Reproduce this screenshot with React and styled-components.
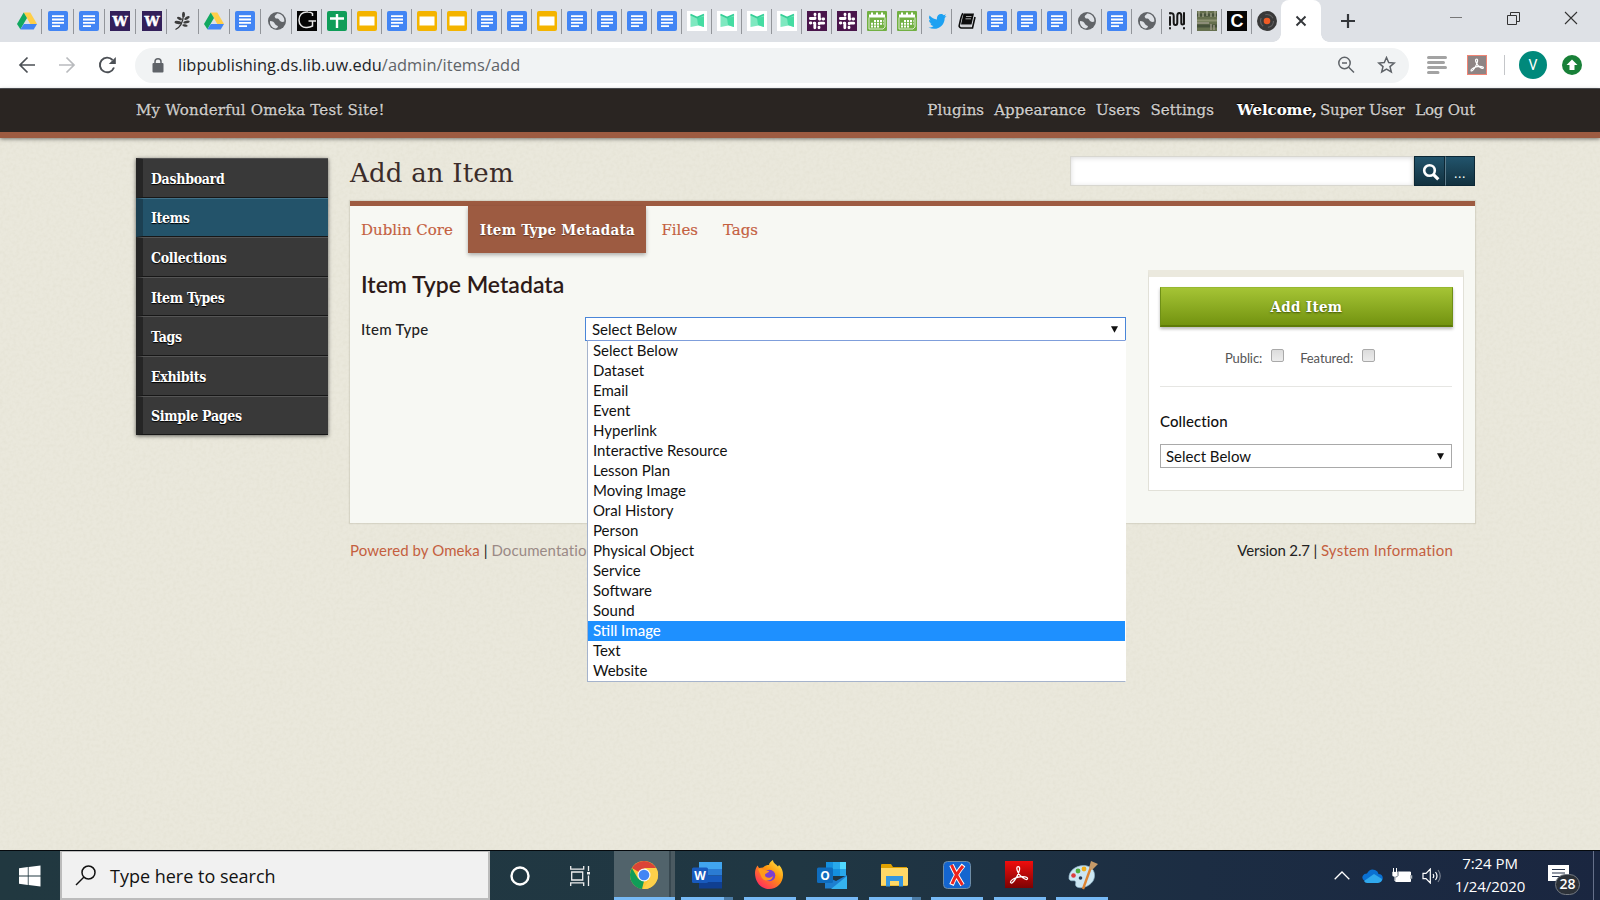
import React from "react";
import styled, { createGlobalStyle, css } from "styled-components";

const slab = '"DejaVu Serif", "Liberation Serif", serif';
const slabNarrow = '"DejaVu Serif Condensed", "DejaVu Serif", serif';
const sans = 'Lato, "Liberation Sans", sans-serif';
const system = '"Open Sans", "Noto Sans", sans-serif';
const rust = "#9d5b41";
const linkColor = "#c4603f";

const GlobalStyle = createGlobalStyle`
  *, *::before, *::after { box-sizing: border-box; }
  body { margin: 0; overflow: hidden; }
  button { border: 0; padding: 0; background: none; font: inherit; color: inherit; }
  svg { display: block; flex: none; }
`;

const Screen = styled.div`
  width: 1600px;
  height: 900px;
  display: flex;
  flex-direction: column;
  overflow: hidden;
  background: #eae8dc;
  font-family: ${sans};
  font-size: 15px;
  color: #222;
`;

/* ---------- browser ---------- */
const TabStrip = styled.div`
  height: 42px;
  flex: none;
  display: flex;
  background: #dee1e6;
  padding-left: 11px;
`;
const Tab = styled.div`
  width: ${(p) => (p.$last ? 29.2 : p.$wide ? 31.25 : 30)}px;
  height: 42px;
  flex: none;
  display: flex;
  align-items: center;
  justify-content: center;
  background: ${(p) => (p.$last ? "none" : "linear-gradient(#92959a, #92959a) right 0 top 9px / 1px 25px no-repeat")};
`;
const ActiveTab = styled.div`
  width: 40px;
  height: 42px;
  flex: none;
  display: grid;
  place-items: center;
  background: #fff;
  border-radius: 8px 8px 0 0;
  position: relative;
  &::before, &::after {
    content: "";
    position: absolute;
    bottom: 0;
    width: 8px;
    height: 8px;
  }
  &::before { left: -8px; background: radial-gradient(circle at 0 0, transparent 7.5px, #fff 8px); }
  &::after { right: -8px; background: radial-gradient(circle at 100% 0, transparent 7.5px, #fff 8px); }
`;
const NewTab = styled.button`
  width: 54px;
  display: grid;
  place-items: center;
`;
const WindowButtons = styled.div`
  margin-left: auto;
  display: flex;
  height: 35px;
`;
const WindowButton = styled.button`
  width: 57.5px;
  display: grid;
  place-items: center;
`;
const Toolbar = styled.div`
  height: 47px;
  flex: none;
  display: flex;
  align-items: center;
  background: #fff;
  border-bottom: 1px solid #55565a;
  padding: 0 18px 0 17px;
`;
const NavButton = styled.button`
  width: 20px;
  height: 20px;
  margin-right: 20px;
  display: grid;
  place-items: center;
`;
const AddressBar = styled.div`
  width: 1274px;
  height: 35px;
  margin-left: -2px;
  border-radius: 18px;
  background: #f1f3f4;
  display: flex;
  align-items: center;
  padding: 0 13px 0 17px;
`;
const Url = styled.div`
  margin-left: 14px;
  flex: 1;
  font: 16.4px/22px ${system};
  letter-spacing: 0.03px;
  color: #606468;
  white-space: nowrap;
  b { font-weight: 400; color: #222428; }
`;
const BarIcons = styled.div`
  display: flex;
  gap: 22px;
`;
const Extensions = styled.div`
  flex: 1;
  display: flex;
  align-items: center;
  padding-left: 18px;
`;
const Spacer = styled.i`
  width: 20px;
`;
const Divider = styled.i`
  width: 1px;
  height: 20px;
  background: #c4c6c9;
  margin: 0 14px 0 17px;
`;
const Avatar = styled.div`
  width: 28px;
  height: 28px;
  border-radius: 50%;
  background: #00897b;
  color: #fff;
  font: 14px/28px Roboto, sans-serif;
  text-align: center;
  margin-right: 15px;
`;

/* ---------- admin site ---------- */
const SiteHeader = styled.header`
  height: 49px;
  flex: none;
  position: relative;
  z-index: 1;
  display: flex;
  align-items: center;
  padding: 0 125px 2px 136px;
  background: #2a2522;
  border-bottom: 6px solid ${rust};
  box-shadow: 0 1px 4px rgba(0, 0, 0, 0.5);
  font: 15px/20px ${slab};
  color: #cfcdcb;
  -webkit-text-stroke: 0.3px #cfcdcb;
  text-shadow: 0 -1px 1px #000;
  white-space: nowrap;
`;
const SiteTitle = styled.div`
  letter-spacing: 0.21px;
`;
const HeaderNav = styled.nav`
  margin-left: auto;
  display: flex;
  gap: 10px;
  letter-spacing: 0.08px;
`;
const UserNav = styled.div`
  display: flex;
  gap: 11px;
  margin-left: 13px;
  letter-spacing: -0.24px;
  strong {
    color: #fff;
    margin-right: -8px;
    letter-spacing: -0.08px;
    -webkit-text-stroke: 0;
  }
`;
const Page = styled.div`
  flex: 1;
  position: relative;
  display: flex;
  align-items: flex-start;
  padding: 20px 125px 0 136px;
`;
const Paper = styled.svg`
  position: absolute;
  inset: 0;
  width: 100%;
  height: 100%;
`;
const SideNav = styled.nav`
  position: relative;
  width: 192px;
  flex: none;
  box-shadow: 0 1px 4px rgba(0, 0, 0, 0.6);
`;
const SideLink = styled.div`
  height: 39.6px;
  display: flex;
  align-items: center;
  padding: 2px 0 0 8px;
  border-left: 7px solid ${(p) => (p.$active ? "#1c4052" : "#252525")};
  border-top: 1px solid ${(p) => (p.$active ? "#417189" : "#555")};
  border-bottom: 1px solid #171717;
  background: ${(p) => (p.$active ? "#23536a" : "#393939")};
  color: #fff;
  font: 700 14px/18px ${slabNarrow};
  letter-spacing: -0.3px;
  text-shadow: 0 1px 1px #000;
`;
const Main = styled.main`
  position: relative;
  width: 1125px;
  margin-left: 22px;
`;
const TitleRow = styled.div`
  height: 43px;
  display: flex;
  align-items: flex-start;
  justify-content: space-between;
`;
const Title = styled.h1`
  margin: -3px 0 0;
  font: 400 26px/36px ${slab};
  letter-spacing: 0.2px;
  color: #3b2c2a;
`;
const SearchForm = styled.div`
  display: flex;
  margin-top: -2px;
  height: 30px;
`;
const SearchInput = styled.div`
  width: 344px;
  background: #fff;
  border: 1px solid #d8d7d0;
  box-shadow: inset 0 1px 5px rgba(0, 0, 0, 0.15);
`;
const SearchButton = styled.button`
  width: ${(p) => p.$w}px;
  display: flex;
  align-items: center;
  justify-content: center;
  background: linear-gradient(#22546c, #12313f);
  border: 1px solid #0c2735;
  border-left-color: ${(p) => (p.$split ? "#5d7c8b" : "#0c2735")};
  color: #fff;
  font: 13px/28px ${system};
  padding: ${(p) => (p.$split ? "3px 0 0" : "1px 0 0 2px")};
  letter-spacing: 0.6px;
`;
const Panel = styled.section`
  height: 322px;
  background: #f7f8f3;
  border-top: 5px solid ${rust};
  box-shadow: 0 0 1px 1px rgba(90, 85, 60, 0.12);
  padding-left: 11px;
`;
const Tabs = styled.div`
  display: flex;
  height: 47px;
  align-items: flex-start;
  font: 15px/48px ${slab};
  color: ${linkColor};
  -webkit-text-stroke: 0.15px;
  white-space: nowrap;
`;
const TabLink = styled.span`
  margin-right: ${(p) => p.$gap}px;
`;
const CurrentTab = styled.span`
  width: 178px;
  height: 47px;
  text-align: center;
  background: ${rust};
  color: #fff;
  font: 700 15px/48px ${slabNarrow};
  letter-spacing: 0.24px;
  -webkit-text-stroke: 0;
  text-shadow: 0 1px 1px rgba(0, 0, 0, 0.4);
  box-shadow: 0 2px 4px rgba(0, 0, 0, 0.3);
  margin-right: 15px;
`;
const PanelBody = styled.div`
  display: flex;
  justify-content: space-between;
  padding: 15px 11px 0 0;
`;
const FormColumn = styled.div`
  width: 766px;
`;
const Heading = styled.h2`
  margin: 0;
  font: 600 23px/32px ${sans};
  color: #2e1b18;
`;
const Field = styled.div`
  display: flex;
  padding-top: 17px;
`;
const FieldLabel = styled.label`
  width: 224px;
  font: 500 15px/24px ${sans};
  letter-spacing: 0.3px;
`;
const SelectWrap = styled.div`
  position: relative;
  width: 541px;
`;
const SelectBox = styled.div`
  height: 24px;
  display: flex;
  align-items: center;
  justify-content: space-between;
  padding: 0 7px 0 ${(p) => (p.$focus ? 6 : 5)}px;
  background: #fff;
  border: 1px solid ${(p) => (p.$focus ? "#4a86d8" : "#a9a9a9")};
  color: #111;
  line-height: 22px;
`;
const Options = styled.div`
  position: absolute;
  z-index: 2;
  top: 23px;
  left: 2px;
  width: 539px;
  background: #fff;
  border: 1px solid #a5b3cc;
  border-top-color: #7f9edb;
  border-right-color: #fff;
`;
const Option = styled.div`
  height: 20px;
  padding-left: 5px;
  line-height: 19px;
  white-space: nowrap;
  ${(p) => p.$hot ? css`background: #1e90ff; color: #fff; font-weight: 500;` : css`color: #111;`}
`;
const SavePanel = styled.aside`
  width: 316px;
  height: 221px;
  margin-top: 2px;
  background: #fff;
  border: 1px solid #e2e1d8;
  border-top: 7px solid #ebe9de;
  padding: 10px 11px;
`;
const AddButton = styled.button`
  width: 293px;
  height: 40px;
  display: block;
  background: linear-gradient(#a5c435, #739310);
  border: 1px solid #6f9016;
  border-top-color: #97b830;
  border-bottom: 2px solid #5e7b08;
  box-shadow: 0 2px 3px rgba(0, 0, 0, 0.28);
  font: 700 15px/36px ${slabNarrow};
  letter-spacing: 0.3px;
  color: #fff;
  text-shadow: 0 1px 2px #3d5205;
`;
const Flags = styled.div`
  display: flex;
  justify-content: center;
  align-items: center;
  height: 60px;
  padding: 3px 12px 0 0;
  border-bottom: 1px solid #e6e6e3;
  font-size: 13px;
  letter-spacing: -0.1px;
  color: #555;
`;
const Check = styled.i`
  width: 13px;
  height: 13px;
  margin: -6px ${(p) => p.$gap}px 0 9px;
  border: 1px solid #a9a9a9;
  border-radius: 2px;
  background: linear-gradient(#dcdcdc, #ececec);
`;
const CollectionLabel = styled.div`
  margin: 23px 0 12px;
  line-height: 22px;
  font-weight: 500;
  color: #111;
  letter-spacing: 0.1px;
`;
const Footer = styled.footer`
  display: flex;
  justify-content: space-between;
  padding: 15px 22px 0 0;
  line-height: 24px;
  letter-spacing: 0.08px;
`;
const FooterLink = styled.span`
  color: ${(p) => (p.$visited ? "#9a8a86" : linkColor)};
  letter-spacing: ${(p) => (p.$spread ? 0.22 : 0.08)}px;
`;
const Version = styled.span`
  letter-spacing: -0.14px;
`;

/* ---------- taskbar ---------- */
const Taskbar = styled.div`
  height: 50px;
  flex: none;
  position: relative;
  display: flex;
  border-top: 1px solid #05090d;
  background: linear-gradient(90deg, #213840 0%, #203743 50%, #1c2d43 75%, #1a2640 100%);
`;
const Start = styled.div`
  width: 60px;
  display: grid;
  place-items: center;
`;
const TaskSearch = styled.div`
  width: 430px;
  display: flex;
  align-items: center;
  background: #f1f1f1;
  border: 2px solid #bcbcbc;
  border-top-width: 1px;
  padding: 1px 0 0 13px;
  gap: 14px;
  font: 18px/24px ${system};
  color: #111;
`;
const SystemButton = styled.div`
  width: ${(p) => p.$w}px;
  display: grid;
  place-items: center;
`;
const TaskSpacer = styled.div`
  width: 5px;
`;
const AppButton = styled.div`
  width: ${(p) => (p.$active ? 61 : 52)}px;
  margin-right: ${(p) => (p.$active ? 6 : 10.5)}px;
  display: flex;
  align-items: center;
  justify-content: center;
  border-bottom: 3px solid #76b9f5;
  background: ${(p) => (p.$active ? "linear-gradient(90deg, #51636b 55px, #384850 55px, #384850 57px, #4b5a61 57px)" : "none")};
  ${(p) => p.$stacked && css`border-image: linear-gradient(90deg, #76b9f5 41px, #4b7ba5 41px) 3;`}
  svg { margin: 1px ${(p) => (p.$active ? 2 : 1)}px 0 0; }
`;
const Tray = styled.div`
  margin-left: auto;
  display: flex;
  align-items: center;
  color: #fff;
`;
const TrayIcon = styled.span`
  margin-right: ${(p) => p.$gap}px;
`;
const Clock = styled.div`
  width: 82px;
  margin: -2px 2px 0 7px;
  text-align: center;
  font: 15px/23px ${system};
  letter-spacing: -0.05px;
`;
const Notifications = styled.div`
  position: relative;
  margin: -2px 24px 0 15px;
`;
const Count = styled.div`
  position: absolute;
  left: 7px;
  top: 9px;
  width: 25px;
  height: 21px;
  border-radius: 11px;
  background: #2c3138;
  border: 1px solid #747a82;
  text-align: center;
  font: 600 14px/18px ${system};
`;
const DesktopEdge = styled.div`
  width: 7px;
  height: 49px;
  border-left: 1px solid #65708a;
`;

/* ---------- favicons ---------- */
const favicons = {
  drive: <><path d="M6.7 1.5h6.6L20 13h-6.7z" fill="#ffcf48" /><path d="M6.7 1.5 10 7 3.4 18.3 0 13z" fill="#11a861" /><path d="M6.8 13H20l-3.3 5.5H3.3z" fill="#4285f4" /></>,
  doc: <><rect width="20" height="20" rx="2" fill="#4285f4" /><path d="M4 5.2h12M4 8.5h12M4 11.8h12M4 15.2h8" stroke="#fff" strokeWidth="1.8" /></>,
  slides: <><rect width="20" height="20" rx="2" fill="#f4b400" /><rect x="2.5" y="5.5" width="15" height="9" fill="#fff" /></>,
  sheets: <><rect width="20" height="20" rx="2" fill="#0f9d58" /><path d="M10 3v14M3 7.5h14" stroke="#fff" strokeWidth="2.4" /></>,
  uw: <><rect width="20" height="20" fill="#33205a" /><text x="10" y="14.7" textAnchor="middle" fontFamily="DejaVu Serif" fontWeight="700" fontSize="13.5" fill="#fff" stroke="#fff" strokeWidth=".5">W</text></>,
  leaf: <><path d="M2.500 18.500C8 16 10 11 10.500 4" fill="none" stroke="#333" strokeWidth="1.300" /><g fill="#3c3c3c"><ellipse cx="10.500" cy="3.500" rx="1.500" ry="2.700" /><ellipse cx="6.500" cy="7.500" rx="2.700" ry="1.400" transform="rotate(25 6.500 7.500)" /><ellipse cx="14" cy="7" rx="3" ry="1.400" transform="rotate(-30 14 7)" /><ellipse cx="5" cy="11.500" rx="3.500" ry="1.500" transform="rotate(10 5 11.500)" /><ellipse cx="13.500" cy="11" rx="3.200" ry="1.400" transform="rotate(-12 13.500 11)" /><ellipse cx="12" cy="14.500" rx="2.700" ry="1.200" transform="rotate(12 12 14.500)" /></g></>,
  globe: <><circle cx="10" cy="10" r="9" fill="#616468" /><path d="M3 10c3 0 4 1 5 3s3 1 3 3l-2 1.5C5 17 2.5 14 3 10zM10 2.5c-1 2-3 2-2 4s3 0 4 2 3 3 5.3 2C18 6 14 2 10 2.5z" fill="#dee1e6" /></>,
  gale: <><rect width="20" height="20" fill="#050505" /><path d="M11 1C5 .5 2 4 2 9s3.500 8 8 7.500q3-.2 5.500-1.500V10M11.500 10H19M11 1q3 0 4.500 1.500V5" fill="none" stroke="#e8e8e8" strokeWidth="1.500" /></>,
  mint: <><rect width="20" height="20" fill="#fff" /><path d="M3.500 3.500 10 6.500l7-3V16l-5.500-1.500-8 1.500z" fill="#7fe8c0" /><path d="m10 7 7-1.500V16l-6-2z" fill="#45dca2" /><path d="m3.500 3.500 6.500 3 7-3" fill="none" stroke="#35cf97" strokeWidth="1.600" /></>,
  slack: <><rect width="20" height="20" fill="#4a154b" /><path d="M8 3.200v.6M8 7.500H3.300M12.300 3.200v4.500M16.700 8h-.7M16.700 12.200h-4.500M12 16.800v-.6M7.800 16.800v-4.500M3.300 12h.6M8 7.500V6.800M12.300 8h.7M12.200 12.200v.6M7.800 12.200h-.6" stroke="#fff" strokeWidth="2.800" strokeLinecap="round" /></>,
  calendar: <><rect width="20" height="20" rx="1" fill="#72b043" /><path d="M2 6.5V18h14l2-2V6.500" fill="none" stroke="#dcecd0" /><path d="M2 5h16" stroke="#fff" strokeWidth="3" /><path d="M5 1.500v3M10 1.500v3M15 1.500v3" stroke="#fff" strokeWidth="2" /><path d="M7 10h9.500M4 12.700h12.500M4 15.500h9" stroke="#fff" strokeWidth="2" strokeDasharray="2 1" /></>,
  twitter: <path d="M1.500 16.500c2 .1 3.600-.4 5-1.500-1.600 0-2.700-1-3.200-2.400h1.500C3 12 2 10.800 2 9l1.500.4C2 8.200 1.600 6.400 2.600 4.600 4.600 7 7 8.200 10 8.400 9.400 5.500 11.300 3 14 3c1.200 0 2 .4 2.800 1.200L19 3.300l-1.500 2.200 2-.5-1.800 1.900C17.700 15 10 20.500 1.500 16.500z" fill="#1da1f2" />,
  book: <><path d="M6.500 2.500H17l-2.500 11H4z" fill="#0c0c0c" /><path d="M6 2.500C4 3.500 3 12.500 2.300 14S3 17 4.500 17h11L18 6" fill="none" stroke="#0c0c0c" strokeWidth="1.600" /><path d="M9 5.500h5.500M8.500 7.800H14M4.500 15h9.500" stroke="#b5b5b5" strokeWidth=".9" /></>,
  squiggle: <path d="M3 2v.1M3 6v8M3 17v.5M3 2.500Q6.700 1.500 6.700 5v6.500q0 2.500 1.800 2.500t1.800-2.500V5q0-3 2-3t2 3v7q0 1.500 1.500 1.500M17 2v11M17 17v.5" fill="none" stroke="#161616" strokeWidth="2" strokeLinecap="round" />,
  photo: <><rect width="20" height="20" fill="#66704e" /><path d="M0 4h20M0 15h20" stroke="#46513a" strokeWidth="3" /><path d="M2 0v6M6 2v4M10 0v5M14 2v4M18 0v6" stroke="#a3a68c" strokeWidth="1.300" /><path d="M0 9.500h20" stroke="#8d9272" strokeWidth="2" /><path d="M0 12h12M14 13v6M17 14v5" stroke="#9a9787" strokeWidth="1.500" /></>,
  cee: <><rect width="20" height="20" fill="#050505" /><text x="10" y="16.300" textAnchor="middle" fontFamily="Liberation Sans" fontWeight="700" fontSize="18" fill="#fff">C</text></>,
  disc: <><circle cx="10" cy="10" r="10" fill="#393939" /><circle cx="10" cy="10" r="6.500" fill="none" stroke="#616161" strokeWidth="1.200" strokeDasharray="9 5" /><circle cx="10" cy="10" r="3.300" fill="#ef5b25" /></>,
};
const Favicon = ({ name }) => <svg width="20" height="20" viewBox="0 0 20 20">{favicons[name]}</svg>;

const openTabs =
  "drive doc doc uw uw leaf drive doc globe gale sheets slides doc slides slides doc doc slides doc doc doc doc mint mint mint mint slack slack calendar calendar twitter book doc doc doc globe doc globe squiggle photo cee disc".split(" ");

const Line = ({ size = 20, d, color = "#4c5055", w = 1.7 }) => (
  <svg width={size} height={size} viewBox="0 0 20 20" fill="none" stroke={color} strokeWidth={w}><path d={d} /></svg>
);
const AcrobatMark = ({ color, w }) => (
  <path d="M9.500 4c2 0 1 4-1 7.500S4.500 17 4 15.500 8 11.500 12 11.300s5 1.200 4 2-5-2-6.500-5S8.500 4 9.500 4z" fill="none" stroke={color} strokeWidth={w} />
);
const Arrow = () => <svg width="7" height="7" viewBox="0 0 7 7"><path d="M0 .3h7L3.500 6.800z" fill="#111" /></svg>;

/* ---------- taskbar apps ---------- */
const apps = [
  ["chrome", <><circle cx="14" cy="14" r="14" fill="#fcc934" /><path d="M14 14 1.900 7A14 14 0 0 1 26.100 7z" fill="#db4437" /><path d="M1.900 7 8 17.500 14 20l-2 8A14 14 0 0 1 1.900 7z" fill="#109d58" /><path d="M14 7h12.100A14 14 0 0 1 13 28l7-10.500z" fill="#fdd04a" /><circle cx="14" cy="14" r="6.500" fill="#f4f6f8" /><circle cx="14" cy="14" r="5.300" fill="#4285f4" /></>],
  ["word", <><path d="M6 1h23v7H6z" fill="#41a5ee" /><path d="M6 8h23v6.500H6z" fill="#2b7cd3" /><path d="M6 14.500h23V21H6z" fill="#185abd" /><path d="M6 21h23v6.500H6z" fill="#103f91" /><rect x="-1" y="6.500" width="16" height="15.500" rx="1.500" fill="#185abd" /><text x="7" y="18.700" textAnchor="middle" fontFamily="Open Sans" fontSize="12" fontWeight="700" fill="#fff">W</text></>],
  ["firefox", <><defs><linearGradient id="ff" x1="1" y1="0" x2=".2" y2="1"><stop stopColor="#fff44f" /><stop offset=".45" stopColor="#ff980e" /><stop offset="1" stopColor="#ff2464" /></linearGradient></defs><path d="M0 12c0-3 1-5 2.500-7.500L4 7l4-.5C10 4.500 12 4 14 4c0-2 2-4 4-5 0 3 3 4 5 6.500l1-1.500c3 3 4 6 4 10 0 8-6 14-14 14S0 21 0 12z" fill="url(#ff)" /><circle cx="14.500" cy="14.500" r="5.800" fill="#7b3fd1" /><path d="M3 8c4-2 6 2 11 2 0 2-4 2-4 4 0 3 5 4 8 1-1 6-10 6-12 0z" fill="#ff9a1c" /></>],
  ["outlook", <><path d="M8 1h20v14H8z" fill="#1490df" /><path d="M15 1h7v7h-7zM22 8h6v7h-6z" fill="#28a8ea" /><path d="M22 1h6v7h-6z" fill="#50d9ff" /><path d="M7 15l11 5 11-6v13.500H7z" fill="#1d7fd0" /><path d="m13 28 16-13v13z" fill="#35b3ee" /><rect x="-1" y="6.500" width="16" height="15.500" rx="1.500" fill="#0f6cbd" /><text x="7" y="18.700" textAnchor="middle" fontFamily="Open Sans" fontSize="12" fontWeight="700" fill="#fff">O</text></>],
  ["folder", <><path d="M1 4q0-1 1-1h9l2 3h14v19H1z" fill="#e0a100" /><path d="M1 7h27v17.500H1z" fill="#ffd867" /><path d="M6 25.500V15h17v10.500h-4V20h-9v5.500z" fill="#3596e0" /></>],
  ["oxygen", <><rect x=".5" y=".5" width="27" height="27" rx="4" fill="#1465cf" stroke="#6f8ea8" /><path d="M8.500 4Q12 12 19.500 24M20.500 4Q13 13 8.500 24" fill="none" stroke="#fff" strokeWidth="4.800" /><path d="M8.500 4Q12 12 19.500 24M20 5Q13 13 9 23" fill="none" stroke="#ee231d" strokeWidth="3" /></>],
  ["acrobat", <><defs><linearGradient id="ac" x2="0" y2="1"><stop stopColor="#f00d0d" /><stop offset="1" stopColor="#7d0303" /></linearGradient></defs><rect width="28" height="27" fill="url(#ac)" /><g transform="scale(1.38)"><AcrobatMark color="#fff" w=".9" /></g></>],
  ["paint", <><path d="M1 18C0 9 10 3 19 5c8 2 9 10 6 15-4 6-12 8-16 6-3-2 0-5-2-6s-4 1-6-2z" fill="#cce6f2" stroke="#8fb4c8" strokeWidth=".7" /><circle cx="5.500" cy="14.500" r="2.300" fill="#dc3d3d" /><circle cx="10" cy="10" r="2.400" fill="#51ad3d" /><circle cx="16" cy="8" r="2.400" fill="#f1ae19" /><circle cx="12.500" cy="17" r="1.800" fill="#273a55" /><path d="m15 28 8-22" stroke="#dd8432" strokeWidth="2.400" /><path d="m21 7 2-7 7 3-6 6z" fill="#c69a68" /></>],
];

const sideLinks = ["Dashboard", "Items", "Collections", "Item Types", "Tags", "Exhibits", "Simple Pages"];
const itemTypes = ["Select Below", "Dataset", "Email", "Event", "Hyperlink", "Interactive Resource", "Lesson Plan", "Moving Image", "Oral History", "Person", "Physical Object", "Service", "Software", "Sound", "Still Image", "Text", "Website"];

function Browser() {
  return (
    <>
      <TabStrip>
        {openTabs.map((name, i) => (
          <Tab key={i} $wide={i < 9} $last={i === openTabs.length - 1}><Favicon name={name} /></Tab>
        ))}
        <ActiveTab><Line size={20} d="m5.500 5.500 9 9m0-9-9 9" color="#33363a" w={1.900} /></ActiveTab>
        <NewTab><Line d="M10 3v14M3 10h14" color="#33363a" w={2.200} /></NewTab>
        <WindowButtons>
          <WindowButton><Line d="M4 9.500h12" color="#777" w={1} /></WindowButton>
          <WindowButton><Line d="M3.500 7.500h9v9h-9zM6.500 7V4.500h9v9H13" color="#333" w={1} /></WindowButton>
          <WindowButton><Line d="m4 4 12 12M16 4 4 16" color="#333" w={1.100} /></WindowButton>
        </WindowButtons>
      </TabStrip>
      <Toolbar>
        <NavButton><Line d="M18 10H3m7.500-7.500L3 10l7.500 7.500" /></NavButton>
        <NavButton><Line d="M2 10h15M9.500 2.500 17 10l-7.500 7.500" color="#b9bbbe" /></NavButton>
        <NavButton><svg width="20" height="20" viewBox="0 0 20 20"><path d="M17 12.500A7.300 7.300 0 1 1 15.600 5" fill="none" stroke="#4c5055" strokeWidth="1.900" /><path d="M18.800 2v7h-7z" fill="#4c5055" /></svg></NavButton>
        <AddressBar>
          <svg width="12" height="15" viewBox="0 0 12 15"><rect x=".5" y="5" width="11" height="9.500" rx="1" fill="#5f6368" /><path d="M3 6V3.800a3 3 0 0 1 6 0V6" fill="none" stroke="#5f6368" strokeWidth="1.500" /></svg>
          <Url><b>libpublishing.ds.lib.uw.edu</b>/admin/items/add</Url>
          <BarIcons>
            <svg width="18" height="18" viewBox="0 0 18 18" fill="none" stroke="#5f6368" strokeWidth="1.500"><circle cx="7.500" cy="7" r="5.700" /><path d="m11.700 11.200 5.300 5.300M5 7h5" /></svg>
            <svg width="19" height="18" viewBox="0 0 19 18" fill="none" stroke="#5f6368" strokeWidth="1.500"><path d="m9.500 1.500 2.200 5 5.500.5-4.200 3.600 1.300 5.400-4.800-2.900L4.700 16 6 10.600 1.800 7l5.500-.5z" /></svg>
          </BarIcons>
        </AddressBar>
        <Extensions>
          <svg width="20" height="20" viewBox="0 0 20 20" stroke="#a3a3a3" strokeWidth="3" strokeLinecap="round"><path d="M1.500 2.500h17M1.500 7.500h15M1.500 12.500h17M1.500 17.500H11" /></svg>
          <Spacer />
          <svg width="20" height="20" viewBox="0 0 20 20"><rect x=".5" y=".5" width="19" height="19" fill="#8e8484" stroke="#f08474" /><AcrobatMark color="#fff" w="1.200" /></svg>
          <Divider />
          <Avatar>V</Avatar>
          <svg width="20" height="20" viewBox="0 0 20 20"><circle cx="10" cy="10" r="10" fill="#188038" /><path d="m10 4.500 5.500 5.500H12.500v5h-5v-5h-3z" fill="#fff" /></svg>
        </Extensions>
      </Toolbar>
    </>
  );
}

function PaperTexture() {
  return (
    <Paper>
      <filter id="paper">
        <feTurbulence type="fractalNoise" baseFrequency="0.3" numOctaves="2" />
        <feColorMatrix values="0 0 0 0 .45  0 0 0 0 .42  0 0 0 0 .28  .16 0 0 0 -.06" />
      </filter>
      <rect width="100%" height="100%" filter="url(#paper)" />
    </Paper>
  );
}

function Admin() {
  return (
    <>
      <SiteHeader>
        <SiteTitle>My Wonderful Omeka Test Site!</SiteTitle>
        <HeaderNav>
          <span>Plugins</span><span>Appearance</span><span>Users</span><span>Settings</span>
          <UserNav><strong>Welcome,</strong><span>Super User</span><span>Log Out</span></UserNav>
        </HeaderNav>
      </SiteHeader>
      <Page>
        <PaperTexture />
        <SideNav>
          {sideLinks.map((name) => <SideLink key={name} $active={name === "Items"}>{name}</SideLink>)}
        </SideNav>
        <Main>
          <TitleRow>
            <Title>Add an Item</Title>
            <SearchForm>
              <SearchInput />
              <SearchButton $w={31}>
                <svg width="18" height="18" viewBox="0 0 18 18" fill="none" stroke="#fff" strokeWidth="2.600"><circle cx="7.500" cy="7.500" r="5.300" /><path d="m11.300 11.300 5 5" strokeWidth="3.200" /></svg>
              </SearchButton>
              <SearchButton $w={30} $split>...</SearchButton>
            </SearchForm>
          </TitleRow>
          <Panel>
            <Tabs>
              <TabLink $gap={15.5}>Dublin Core</TabLink>
              <CurrentTab>Item Type Metadata</CurrentTab>
              <TabLink $gap={25}>Files</TabLink>
              <TabLink $gap={0}>Tags</TabLink>
            </Tabs>
            <PanelBody>
              <FormColumn>
                <Heading>Item Type Metadata</Heading>
                <Field>
                  <FieldLabel>Item Type</FieldLabel>
                  <SelectWrap>
                    <SelectBox $focus>Select Below<Arrow /></SelectBox>
                    <Options>
                      {itemTypes.map((name) => <Option key={name} $hot={name === "Still Image"}>{name}</Option>)}
                    </Options>
                  </SelectWrap>
                </Field>
              </FormColumn>
              <SavePanel>
                <AddButton>Add Item</AddButton>
                <Flags>Public:<Check $gap={16} />Featured:<Check $gap={0} /></Flags>
                <CollectionLabel>Collection</CollectionLabel>
                <SelectBox>Select Below<Arrow /></SelectBox>
              </SavePanel>
            </PanelBody>
          </Panel>
          <Footer>
            <div><FooterLink>Powered by Omeka</FooterLink> | <FooterLink $visited>Documentation</FooterLink></div>
            <div><Version>Version 2.7 | </Version><FooterLink $spread>System Information</FooterLink></div>
          </Footer>
        </Main>
      </Page>
    </>
  );
}

function WindowsTaskbar() {
  return (
    <Taskbar>
      <Start><svg width="22" height="22" viewBox="0 0 22 22" fill="#fff"><path d="M0 3.200 8.800 2v8.500H0zM9.600 1.900 21.500.5v10H9.600zM0 11.500h8.800V20L0 18.800zM9.600 11.500h11.900v10L9.600 20z" /></svg></Start>
      <TaskSearch>
        <svg width="21" height="21" viewBox="0 0 21 21" fill="none" stroke="#111" strokeWidth="1.500"><circle cx="13.500" cy="7.500" r="6.500" /><path d="M9 12 1 20" /></svg>
        Type here to search
      </TaskSearch>
      <SystemButton $w={60}><svg width="20" height="20" viewBox="0 0 20 20"><circle cx="10" cy="10" r="8.500" fill="none" stroke="#fff" strokeWidth="2.400" /></svg></SystemButton>
      <SystemButton $w={59}><svg width="20" height="20" viewBox="0 0 20 20" fill="none" stroke="#eee" strokeWidth="1.300"><path d="M.7 0v3.200h13V0M.7 20v-3.200h13V20M1.700 6h11v8h-11zM18.500 0v5M18.500 9.500V20" /><path d="M17 7.200h3" strokeWidth="2.500" /></svg></SystemButton>
      <TaskSpacer />
      {apps.map(([name, art], i) => (
        <AppButton key={name} $active={i === 0} $stacked={name === "word" || name === "folder"}>
          <svg width="28" height="28" viewBox="0 0 28 28" overflow="visible">{art}</svg>
        </AppButton>
      ))}
      <Tray>
        <TrayIcon $gap={12}><svg width="16" height="9" viewBox="0 0 16 9"><path d="m.7 8.300 7.300-7.300 7.300 7.300" fill="none" stroke="#fff" strokeWidth="1.300" /></svg></TrayIcon>
        <TrayIcon $gap={8}><svg width="21" height="14" viewBox="0 0 21 14"><path d="M3 12Q-1 10 1 6.500q1-2 4-2 3-5.500 8-3.500 3 1 3.500 4 4 0 4.300 4-.2 4-4 4z" fill="#0a70d2" /><path d="m2 12 10-7 8 5q0 3.500-4 4H5q-2 0-3-2z" fill="#30a8ed" /></svg></TrayIcon>
        <TrayIcon $gap={9}><svg width="22" height="15" viewBox="0 0 22 15"><path d="M5 4h14.500v9.500H5z" fill="#fff" stroke="#fff" /><path d="M20 7h1.500v4H20zM1 3.500h6v4L5.500 9H2.500L1 7.500z" fill="#fff" stroke="#1a2b40" strokeWidth=".7" /><path d="M2.500 0v4M5.500 0v4M4 8v5h2" fill="none" stroke="#fff" /></svg></TrayIcon>
        <svg width="20" height="16" viewBox="0 0 20 16" fill="none" stroke="#fff" strokeWidth="1.200"><path d="M1 5.300h3L8.300 1v14L4 10.700H1zM11 6q1.500 2 0 4M13.500 4q3 4 0 8" /><path d="M16 2q4.500 6 0 12" opacity=".4" /></svg>
        <Clock>7:24 PM<br />1/24/2020</Clock>
        <Notifications>
          <svg width="21" height="20" viewBox="0 0 21 20"><path d="M0 0h21v16h-6l-4 4v-4H0z" fill="#fff" /><path d="M4 4.500h13M4 8h13M4 11.500h8" stroke="#27334a" strokeWidth="1.100" /></svg>
          <Count>28</Count>
        </Notifications>
        <DesktopEdge />
      </Tray>
    </Taskbar>
  );
}

export default function App() {
  return (
    <Screen>
      <GlobalStyle />
      <Browser />
      <Admin />
      <WindowsTaskbar />
    </Screen>
  );
}
